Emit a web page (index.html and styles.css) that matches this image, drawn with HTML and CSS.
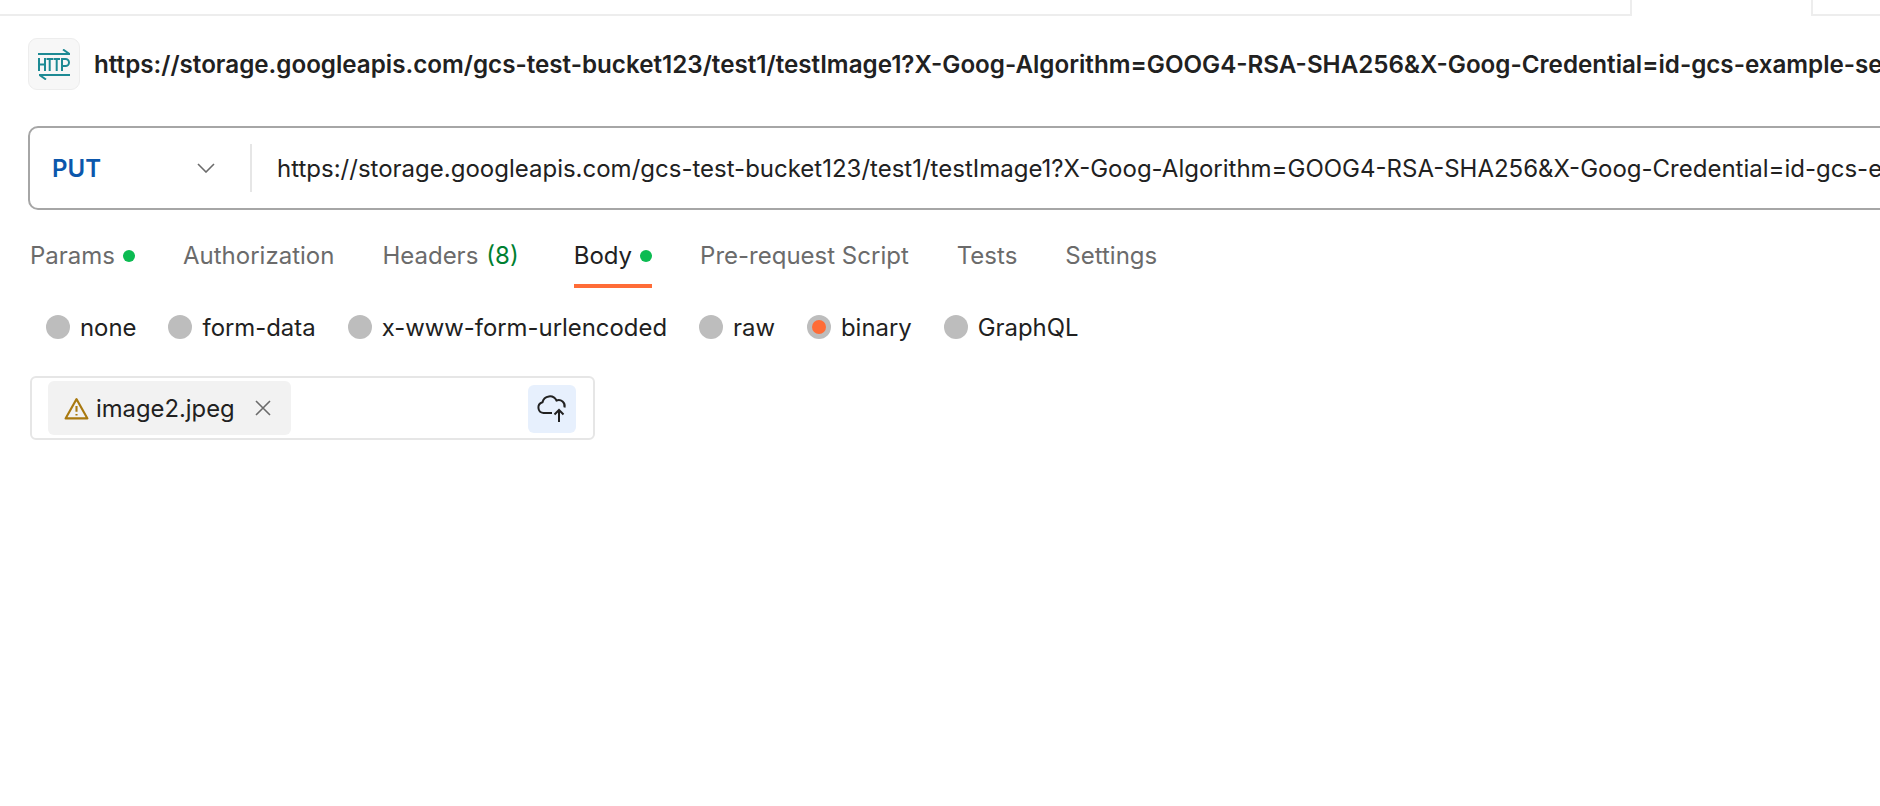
FILE: index.html
```html
<!DOCTYPE html>
<html lang="en">
<head>
    <meta charset="UTF-8">
    <meta name="viewport" content="width=device-width, initial-scale=1.0">
    <title>PUT request</title>
    <link rel="stylesheet" href="styles.css">
</head>
<body>

<div class="top-tabs">
    <div class="top-tab-left"></div>
    <div class="top-tab-active"></div>
    <div class="top-tab-right"></div>
</div>

<div class="request-title">
    <div class="http-icon">
        <svg width="33" height="31" viewBox="0 0 33 31" fill="none" stroke="#1d8a94" stroke-width="2">
            <path d="M0 5H32M25 0.5L31.5 5"/>
            <path d="M1 9V22M7 9V22M1 15.5H7M8.5 10H15M11.7 10V22M15.5 10H22M18.7 10V22M24 22V10H27.5A3.2 3.2 0 0 1 27.5 17H24"/>
            <path d="M1 26H32M8 30.5L1.5 26"/>
        </svg>
    </div>
    <div class="title-text">https://storage.googleapis.com/gcs-test-bucket123/test1/testImage1?X-Goog-Algorithm=GOOG4-RSA-SHA256&amp;X-Goog-Credential=id-gcs-example-service</div>
</div>

<div class="url-bar">
    <div class="method">
        <span class="method-name">PUT</span>
        <svg width="18" height="10" viewBox="0 0 18 10" fill="none" stroke="#6b6b6b" stroke-width="1.6"><path d="M1 1L9 9L17 1"/></svg>
    </div>
    <div class="url-text">https://storage.googleapis.com/gcs-test-bucket123/test1/testImage1?X-Goog-Algorithm=GOOG4-RSA-SHA256&amp;X-Goog-Credential=id-gcs-example-service</div>
</div>

<div class="tabs">
    <div class="tab">Params<span class="dot"></span></div>
    <div class="tab">Authorization</div>
    <div class="tab headers">Headers<span class="count">(8)</span></div>
    <div class="tab active">Body<span class="dot"></span></div>
    <div class="tab">Pre-request Script</div>
    <div class="tab">Tests</div>
    <div class="tab">Settings</div>
</div>

<div class="body-types">
    <label class="body-type"><span class="radio"></span>none</label>
    <label class="body-type"><span class="radio"></span>form-data</label>
    <label class="body-type"><span class="radio"></span>x-www-form-urlencoded</label>
    <label class="body-type"><span class="radio"></span>raw</label>
    <label class="body-type"><span class="radio checked"></span>binary</label>
    <label class="body-type"><span class="radio"></span>GraphQL</label>
</div>

<div class="file-box">
    <div class="file-chip">
        <svg width="25" height="23" viewBox="0 0 24 22" fill="none" stroke="#a9790f" stroke-width="2" stroke-linejoin="round">
            <path d="M12 2L22.5 20.5H1.5Z"/>
            <path d="M12 8.5V14M12 16.2V17.8"/>
        </svg>
        <span class="file-name">image2.jpeg</span>
        <svg class="file-remove" width="16" height="16" viewBox="0 0 16 16" fill="none" stroke="#6b6b6b" stroke-width="1.6"><path d="M1 1L15 15M15 1L1 15"/></svg>
    </div>
    <div class="upload-btn">
        <svg width="32" height="32" viewBox="0 0 32 32" fill="none" stroke="#212121" stroke-width="2">
            <path d="M16 20H7.5A5.5 5.5 0 0 1 6.5 9.2A7.5 7.5 0 0 1 20.5 7.5A6 6 0 0 1 28.5 14.5"/>
            <path d="M23 29V17M18.5 21.5L23 17L27.5 21.5"/>
        </svg>
    </div>
</div>

</body>
</html>
```

FILE: styles.css
```css
html, body {
    height: 100%;
}
body {
    margin: 0;
    overflow: hidden;
    background-color: #fff;
    color: #212121;
    font-family: Inter, "Liberation Sans", sans-serif;
}
.top-tabs {
    display: flex;
    height: 16px;
}
.top-tab-left {
    width: 1632px;
    box-sizing: border-box;
    border-bottom: 2px solid #ededed;
    border-right: 2px solid #ededed;
}
.top-tab-active {
    width: 179px;
}
.top-tab-right {
    flex: 1;
    border-bottom: 2px solid #ededed;
    border-left: 2px solid #ededed;
}
.request-title {
    display: flex;
    align-items: center;
    gap: 14px;
    margin: 22px 0 0 28px;
}
.http-icon {
    width: 52px;
    height: 52px;
    flex-shrink: 0;
    box-sizing: border-box;
    display: flex;
    align-items: center;
    justify-content: center;
    background-color: #f7f7f7;
    border: 1px solid #ededed;
    border-radius: 9px;
}
.title-text {
    font-size: 24.2px;
    font-weight: 600;
    white-space: nowrap;
}
.url-bar {
    display: flex;
    align-items: center;
    width: 1900px;
    height: 84px;
    box-sizing: border-box;
    margin: 36px 0 0 28px;
    border: 2px solid #a6a6a6;
    border-radius: 10px;
}
.method {
    display: flex;
    align-items: center;
    justify-content: space-between;
    width: 222px;
    height: 48px;
    flex-shrink: 0;
    box-sizing: border-box;
    padding: 0 35px 0 22px;
    border-right: 2px solid #e6e6e6;
}
.method-name {
    font-size: 24px;
    font-weight: 600;
    color: #0b57ac;
}
.url-text {
    margin-left: 25px;
    font-size: 24px;
    white-space: nowrap;
}
.tabs {
    display: flex;
    gap: 48px;
    margin: 22px 0 0 30px;
}
.tab {
    display: flex;
    align-items: center;
    height: 56px;
    padding-bottom: 9px;
    box-sizing: border-box;
    font-size: 24px;
    color: #6b6b6b;
    white-space: nowrap;
}
.tab.headers {
    margin-right: 7px;
}
.tab.active {
    color: #212121;
    border-bottom: 4px solid #ff6c37;
    padding-bottom: 5px;
}
.dot {
    width: 12px;
    height: 12px;
    margin-left: 8px;
    border-radius: 50%;
    background-color: #0cbb52;
}
.count {
    margin-left: 8px;
    color: #007f31;
}
.body-types {
    display: flex;
    gap: 32px;
    margin: 24px 0 0 46px;
}
.body-type {
    display: flex;
    align-items: center;
    gap: 10px;
    height: 30px;
    font-size: 23.9px;
    white-space: nowrap;
}
.radio {
    width: 24px;
    height: 24px;
    flex-shrink: 0;
    display: flex;
    align-items: center;
    justify-content: center;
    border-radius: 50%;
    background-color: #bdbdbd;
}
.radio.checked::after {
    content: "";
    width: 14px;
    height: 14px;
    border-radius: 50%;
    background-color: #ff6c37;
}
.file-box {
    display: flex;
    align-items: center;
    justify-content: space-between;
    width: 565px;
    height: 64px;
    box-sizing: border-box;
    margin: 34px 0 0 30px;
    padding: 0 17px 0 16px;
    border: 2px solid #e6e6e6;
    border-radius: 6px;
}
.file-chip {
    display: flex;
    align-items: center;
    width: 243px;
    height: 54px;
    box-sizing: border-box;
    padding-left: 16px;
    background-color: #f2f2f2;
    border-radius: 6px;
}
.file-name {
    margin-left: 7px;
    font-size: 23.8px;
}
.file-remove {
    margin-left: 20px;
}
.upload-btn {
    width: 48px;
    height: 48px;
    margin-top: 2px;
    display: flex;
    align-items: center;
    justify-content: center;
    background-color: #e7f0fd;
    border-radius: 6px;
}
```
